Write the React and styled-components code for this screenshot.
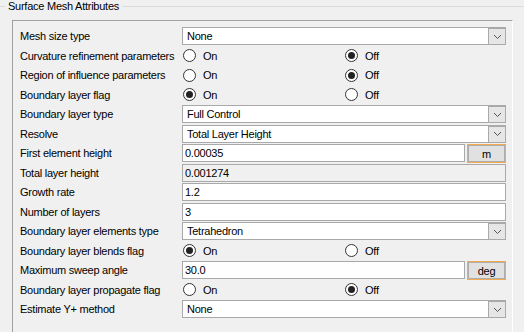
import React from 'react';
import styled, { createGlobalStyle } from 'styled-components';

const Global = createGlobalStyle`
    html, body {
        margin: 0;
        height: 332px;
        overflow: hidden;
        background: #f0f0f0;
    }
    body {
        font-family: 'Liberation Sans', Arial, sans-serif;
        font-size: 11px;
        letter-spacing: -0.25px;
        color: #000;
    }
`;

const Group = styled.fieldset`
    margin: 0 -10px 0 -1px;
    padding: 0;
    border: none;
    border-top: 1px solid #dcdcdc;
    min-width: 0;
`;

const Legend = styled.legend`
    margin-left: 6px;
    padding: 0 3px 0 3px;
    line-height: 13px;
`;

const Panel = styled.div`
    box-sizing: border-box;
    width: 501px;
    margin: 7px 0 0 13px;
    padding: 6px 6px 12px 7px;
    border-top: 1px solid #a0a0a0;
    border-left: 1px solid #a0a0a0;
    border-right: 1px solid #ffffff;
    display: grid;
    grid-template-columns: 162px 1fr;
    grid-auto-rows: 19.5px;
`;

const Label = styled.div`
    height: 18px;
    line-height: 18px;
    white-space: nowrap;
`;

const Field = styled.div`
    display: flex;
    height: 18px;
    gap: 2px;
`;

const TextBox = styled.input`
    box-sizing: border-box;
    flex: 1;
    min-width: 0;
    height: 18px;
    margin: 0;
    padding: 0 2px;
    border: 1px solid #a9a9a9;
    background: ${p => (p.$flat ? '#f0f0f0' : '#fff')};
    font: inherit;
    letter-spacing: inherit;
    color: #000;
    outline: none;
`;

const UnitButton = styled.button`
    box-sizing: border-box;
    width: 39px;
    height: 19px;
    margin: 0;
    padding: 0;
    border: 1px solid #f5a94e;
    box-shadow: inset 0 0 0 1px #adadad;
    background: #e1e1e1;
    font: inherit;
    letter-spacing: inherit;
    color: #000;
`;

const Combo = styled.div`
    box-sizing: border-box;
    display: flex;
    height: 18px;
    border: 1px solid #a9a9a9;
    background: #fff;
`;

const ComboValue = styled.div`
    flex: 1;
    padding-left: 4px;
    line-height: 16px;
    white-space: nowrap;
`;

const DropButton = styled.div`
    box-sizing: border-box;
    width: 17px;
    border: 1px solid #a9a9a9;
    border-right: none;
    border-bottom: none;
    background: #e6e6e6;
    display: flex;
    align-items: center;
    justify-content: center;
`;

const RadioPair = styled.div`
    display: grid;
    grid-template-columns: 162px 1fr;
    height: 18px;
`;

const RadioOption = styled.label`
    display: flex;
    align-items: center;
    gap: 7px;
    padding-left: 1px;
`;

const RadioDot = styled.span`
    box-sizing: border-box;
    width: 13px;
    height: 13px;
    border-radius: 50%;
    border: 1px solid #333;
    background: #fff;
    display: flex;
    align-items: center;
    justify-content: center;

    &::after {
        content: '';
        width: 7px;
        height: 7px;
        border-radius: 50%;
        background: ${p => (p.$checked ? '#222' : 'transparent')};
    }
`;

const Chevron = () => (
    <svg width="9" height="6" viewBox="0 0 9 6">
        <polyline points="1,1 4.5,4.5 8,1" fill="none" stroke="#555" strokeWidth="1" />
    </svg>
);

const Select = ({ value }) => (
    <Combo>
        <ComboValue>{value}</ComboValue>
        <DropButton>
            <Chevron />
        </DropButton>
    </Combo>
);

const Radios = ({ on }) => (
    <RadioPair>
        <RadioOption>
            <RadioDot $checked={on} />
            On
        </RadioOption>
        <RadioOption>
            <RadioDot $checked={!on} />
            Off
        </RadioOption>
    </RadioPair>
);

const rows = [
    ['Mesh size type', { select: 'None' }],
    ['Curvature refinement parameters', { radio: false }],
    ['Region of influence parameters', { radio: false }],
    ['Boundary layer flag', { radio: true }],
    ['Boundary layer type', { select: 'Full Control' }],
    ['Resolve', { select: 'Total Layer Height' }],
    ['First element height', { text: '0.00035', unit: 'm' }],
    ['Total layer height', { text: '0.001274', readonly: true }],
    ['Growth rate', { text: '1.2' }],
    ['Number of layers', { text: '3' }],
    ['Boundary layer elements type', { select: 'Tetrahedron' }],
    ['Boundary layer blends flag', { radio: true }],
    ['Maximum sweep angle', { text: '30.0', unit: 'deg' }],
    ['Boundary layer propagate flag', { radio: false }],
    ['Estimate Y+ method', { select: 'None' }],
];

const Control = ({ spec }) => {
    if (spec.select !== undefined) return <Select value={spec.select} />;
    if (spec.radio !== undefined) return <Radios on={spec.radio} />;
    return (
        <Field>
            <TextBox readOnly $flat={spec.readonly} value={spec.text} />
            {spec.unit && <UnitButton>{spec.unit}</UnitButton>}
        </Field>
    );
};

const App = () => (
    <>
        <Global />
        <Group>
            <Legend>Surface Mesh Attributes</Legend>
            <Panel>
                {rows.map(([label, spec]) => (
                    <React.Fragment key={label}>
                        <Label>{label}</Label>
                        <Control spec={spec} />
                    </React.Fragment>
                ))}
            </Panel>
        </Group>
    </>
);

export default App;
